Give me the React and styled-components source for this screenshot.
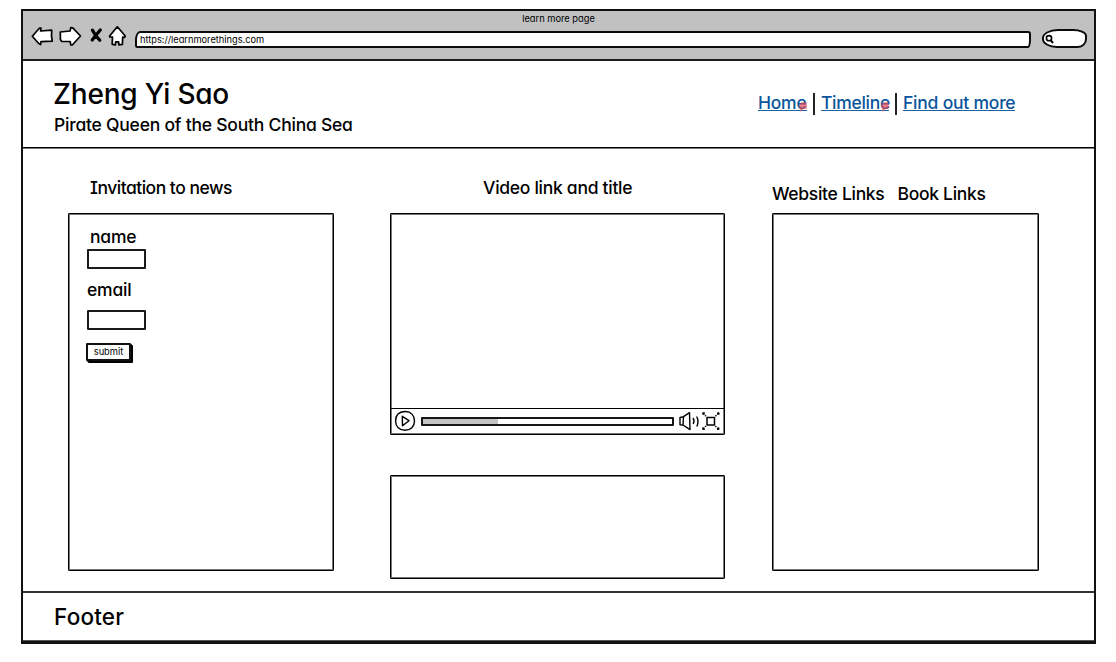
import React from "react";
import styled, { createGlobalStyle } from "styled-components";

const GlobalStyle = createGlobalStyle`
  * { box-sizing: border-box; }
  body {
    margin: 0;
    background: #fff;
    color: #000;
    font-family: Inter, "Liberation Sans", sans-serif;
    font-feature-settings: "cv11", "cv08";
    font-weight: 460;
  }
`;

const Page = styled.div`
  height: 662px;
  padding: 9px 20px 18px 21px;
  overflow: hidden;
`;

const BrowserWindow = styled.div`
  display: flex;
  flex-direction: column;
  height: 635px;
  border: solid #111;
  border-width: 2px 2px 3px;
`;

const Toolbar = styled.div`
  display: flex;
  flex-direction: column;
  height: 50px;
  background: #c1c1c1;
  border-bottom: 2px solid #1c1c1c;
`;

const PageTitle = styled.div`
  height: 16px;
  line-height: 16px;
  font-size: 9.3px;
  font-weight: 440;
  letter-spacing: 0;
  text-align: center;
`;

const ToolbarRow = styled.div`
  display: flex;
  height: 22px;
  padding: 0 7px 0 8px;
`;

const NavIcons = styled.svg`
  display: block;
  flex: none;
  width: 96px;
  height: 22px;
  margin-top: -2px;
  overflow: visible;
  fill: #fff;
  stroke: #000;
  stroke-width: 1.7;
  stroke-linejoin: round;
  stroke-linecap: round;
`;

const AddressBar = styled.div`
  flex: none;
  width: 896px;
  height: 17px;
  margin: 4px 0 0 8px;
  padding-left: 3px;
  border: 2px solid #0b0b0b;
  border-radius: 5px 3px 3px 2px / 9px 3px 8px 3px;
  background: #fff;
  font-size: 9.3px;
  font-weight: 440;
  line-height: 13px;
  letter-spacing: -0.03px;
`;

const SearchBox = styled.div`
  flex: none;
  width: 45px;
  height: 19px;
  margin: 2px 0 0 11px;
  padding: 3px 0 0 1px;
  border: 2px solid #0b0b0b;
  border-radius: 16px 14px 9px 15px / 9px 7px 9px 9px;
  background: #fff;

  svg { display: block; }
`;

const Header = styled.header`
  display: flex;
  justify-content: space-between;
  height: 87px;
  padding: 16px 79px 0 30px;
  border-bottom: 1px solid #000;
  box-shadow: 0 1px 0 #777;
`;

const SiteTitle = styled.h1`
  margin: 0;
  font-size: 28px;
  line-height: 34px;
  font-weight: 460;
  letter-spacing: -0.2px;
`;

const Tagline = styled.p`
  margin: 3px 0 0 1px;
  font-size: 17.5px;
  line-height: 22px;
  letter-spacing: -0.22px;
  white-space: nowrap;
`;

const Nav = styled.nav`
  display: flex;
  height: 22px;
  margin-top: 16px;
`;

const NavLink = styled.a`
  position: relative;
  flex: none;
  width: ${(p) => p.$width}px;
  height: 18px;
  border-bottom: 1px solid #20629f;
  color: #09559b;
  font-size: 17.5px;
  line-height: 20px;
  letter-spacing: ${(p) => p.$spacing}px;
  white-space: nowrap;
`;

const NavDivider = styled.span`
  width: 2px;
  height: 22px;
  margin: 0 6px;
  background: #222;
`;

const Marker = styled.svg`
  position: absolute;
  right: 0;
  top: 9px;
  width: 8px;
  height: 10px;
  fill: rgba(225, 72, 90, 0.7);
`;

const Main = styled.main`
  display: flex;
  height: 443px;
  padding-left: 45px;
`;

const Column = styled.section`
  flex: none;
  width: ${(p) => p.$width}px;
  margin-right: ${(p) => p.$gap || 0}px;
`;

const ColumnHeading = styled.div`
  display: flex;
  gap: 13px;
  height: 65px;
  padding: ${(p) => p.$top}px 0 0 ${(p) => p.$left}px;
  font-size: 17.5px;
  line-height: 20px;
  letter-spacing: ${(p) => p.$spacing}px;
  white-space: nowrap;
`;

const Panel = styled.div`
  height: ${(p) => p.$height}px;
  margin-top: ${(p) => p.$top || 0}px;
  border: 1px solid #000;
  border-radius: 1px;
  box-shadow: inset 0 0 0 1px #777;
`;

const Form = styled.form`
  display: flex;
  flex-direction: column;
  align-items: flex-start;
  padding: 13px 0 0 18px;
`;

const Label = styled.label`
  margin-left: ${(p) => p.$left}px;
  font-size: 17.5px;
  line-height: 20px;
  letter-spacing: -0.2px;
`;

const Field = styled.input`
  display: block;
  width: 59px;
  height: 20px;
  margin: ${(p) => p.$top}px 0 ${(p) => p.$bottom}px 0;
  padding: 0;
  border: 2px solid #1a1a1a;
  border-radius: 1px;
  background: #fff;
`;

const SubmitButton = styled.button`
  width: 45px;
  height: 18px;
  margin-left: -1px;
  padding: 0;
  border: 2px solid #111;
  border-radius: 1px;
  background: #fff;
  box-shadow: 1px 1px 0 #000, 2px 2px 0 #000;
  color: #000;
  font: inherit;
  font-size: 9.3px;
  font-weight: 440;
  line-height: 14px;
  letter-spacing: 0;
`;

const VideoScreen = styled.div`
  height: 195px;
  border-bottom: 1px solid #000;
`;

const Controls = styled.div`
  display: flex;
  align-items: center;
  height: 24px;
  padding-left: 3px;

  svg {
    display: block;
    flex: none;
    overflow: visible;
    fill: none;
    stroke: #000;
    stroke-width: 1.4;
    stroke-linejoin: round;
  }
`;

const Track = styled.div`
  flex: none;
  width: 253px;
  height: 9px;
  margin: 0 5px;
  border: 2px solid #161616;
  border-radius: 1px;
  background: #fff;
`;

const Progress = styled.div`
  width: 30.2%;
  height: 100%;
  background: #c4c4c4;
`;

const Footer = styled.footer`
  flex: 1;
  padding: 10px 0 0 31px;
  border-top: 2px solid #333;
  border-bottom: 1px solid #555;
  font-size: 22.5px;
  line-height: 28px;
  letter-spacing: 0.18px;
`;

const CommentMarker = () => (
  <Marker viewBox="0 0 8 10">
    <path d="M0.5 2.5 2 0.5 7.5 0.2 8 6.5 4.5 7 1 9.7 1.4 6.8 0.2 6.2Z" />
  </Marker>
);

export default function App() {
  return (
    <>
      <GlobalStyle />
      <Page>
        <BrowserWindow>
          <Toolbar>
            <PageTitle>learn more page</PageTitle>
            <ToolbarRow>
              <NavIcons viewBox="31 25 96 22">
                <path d="M32.3 36.2 39.6 28 41 28.2 40.6 31 51.7 30.2 51.5 36 52.3 41.2 41 41.6 40.6 44.6 38.5 43.3Z" />
                <path d="M60.3 32 70 31 70.8 27.7 73 28.2 80.5 36 72.5 44.8 70.8 45 70.2 41.5 61.6 41.4 60.4 39.5Z" />
                <path fill="none" strokeWidth="3.2" d="M92.4 30.2 95.7 35.5 99.8 40.3M100.3 30 95.7 35.5 92.2 40" />
                <path d="M117.3 26.8 121 31 125.2 36 124.7 37.3 122.7 37.1 122.4 44.4 118.9 44.8 118.6 41.8 115.7 41.8 115.4 44.8 112.2 44.4 112.5 37.2 109.8 37 109.6 36Z" />
              </NavIcons>
              <AddressBar>https://learnmorethings.com</AddressBar>
              <SearchBox>
                <svg width="10" height="11" viewBox="0 0 10 11" fill="none" stroke="#000" strokeWidth="1.6">
                  <circle cx="4" cy="4.2" r="2.6" />
                  <path d="M5.6 6.2 8 9" strokeWidth="2" />
                </svg>
              </SearchBox>
            </ToolbarRow>
          </Toolbar>
          <Header>
            <div>
              <SiteTitle>Zheng Yi Sao</SiteTitle>
              <Tagline>Pirate Queen of the South China Sea</Tagline>
            </div>
            <Nav>
              <NavLink $width={49} $spacing={-0.24}>Home<CommentMarker /></NavLink>
              <NavDivider />
              <NavLink $width={68} $spacing={-0.3}>Timeline<CommentMarker /></NavLink>
              <NavDivider />
              <NavLink $width={112} $spacing={-0.22}>Find out more</NavLink>
            </Nav>
          </Header>
          <Main>
            <Column $width={266} $gap={56}>
              <ColumnHeading $top={30} $left={22} $spacing={-0.5}>Invitation to news</ColumnHeading>
              <Panel $height={358}>
                <Form>
                  <Label $left={3}>name</Label>
                  <Field $top={2} $bottom={11} aria-label="name" />
                  <Label $left={0}>email</Label>
                  <Field $top={10} $bottom={13} aria-label="email" />
                  <SubmitButton type="button">submit</SubmitButton>
                </Form>
              </Panel>
            </Column>
            <Column $width={335} $gap={47}>
              <ColumnHeading $top={30} $left={93} $spacing={-0.28}>Video link and title</ColumnHeading>
              <Panel $height={222}>
                <VideoScreen />
                <Controls>
                  <svg width="22" height="22" viewBox="0 0 22 22">
                    <path d="M11 1.5C17 1.3 20.5 5.5 20.5 11S16.7 20.3 11 20.3 1.6 16.6 1.6 11 5 1.7 11 1.5Z" />
                    <path d="M8.3 6.3 15 10.7 8.5 15.7Z" />
                  </svg>
                  <Track><Progress /></Track>
                  <svg width="20" height="18" viewBox="679 412 20 18">
                    <path d="M680 417.5 683.5 416.7 683 425 680 424.7ZM683.5 416.7 689.5 412.7 690 429.6 683 425" />
                    <path d="M693 418Q695 421 693.2 424M696.6 416.5Q699.3 421 696.8 426.5" />
                  </svg>
                  <svg width="22" height="18" viewBox="699 412 22 18">
                    <path strokeWidth="1.5" d="M707 417.5H714.5V425H707Z" />
                    <path strokeDasharray="2.6 1 2" d="M702.6 412.8 706 416.2M719.2 412.8 715.4 416.2M702.6 429.5 706 425.9M719 429.5 715.4 426.1" />
                    <path fill="#000" strokeWidth="0.8" d="M702.8 412.8h2l-2 1.6ZM719 412.8v2l-2-1.8ZM702.8 429.4v-2l2 1.8ZM719 429.4h-2l2-1.8Z" />
                  </svg>
                </Controls>
              </Panel>
              <Panel $height={104} $top={40} />
            </Column>
            <Column $width={267}>
              <ColumnHeading $top={36} $left={0} $spacing={-0.3}>
                <span>Website Links</span>
                <span>Book Links</span>
              </ColumnHeading>
              <Panel $height={358} />
            </Column>
          </Main>
          <Footer>Footer</Footer>
        </BrowserWindow>
      </Page>
    </>
  );
}
